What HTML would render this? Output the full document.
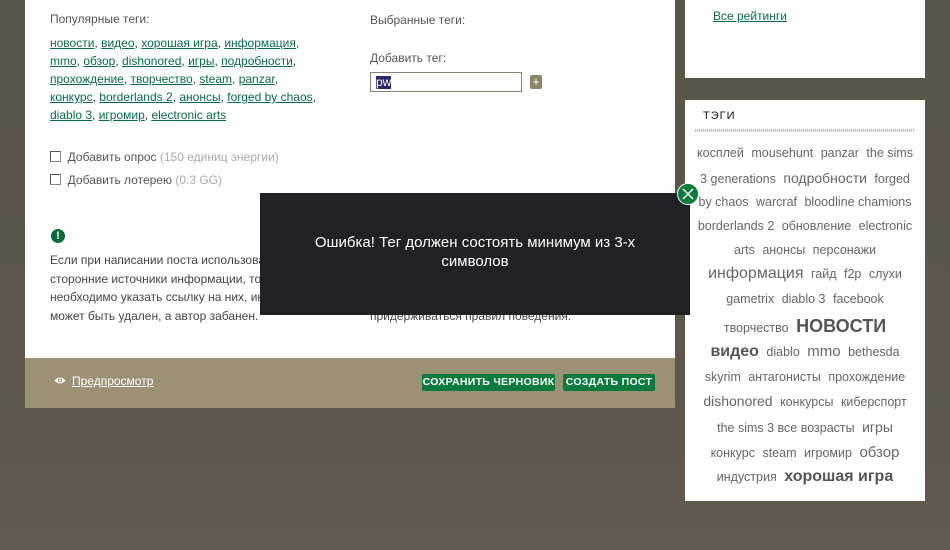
<!DOCTYPE html>
<html><head><meta charset="utf-8"><style>
*{margin:0;padding:0;box-sizing:border-box}
body{width:950px;height:550px;overflow:hidden;background:linear-gradient(#5a5648 0%,#5c5749 70%,#625c4e 100%);font-family:"Liberation Sans","Noto Sans CJK SC",sans-serif;position:relative}
.a{position:absolute;white-space:nowrap}
#main{position:absolute;left:25px;top:0;width:650px;height:358px;background:#fff}
#foot{position:absolute;left:25px;top:358px;width:650px;height:50px;background:#9b9276}
.lbl{font-size:12px;color:#555}
.tags{font-size:12px;line-height:18px;color:#333}
.tags a{color:#0b6b48;text-decoration:underline}
.p{font-size:12px;line-height:18.5px;color:#444}
.cb{width:11px;height:11px;border:1px solid #888;border-top-color:#555;border-left-color:#555;display:inline-block}
.btn{position:absolute;top:374px;height:17px;background:#0b7a3e;color:#fff;font-size:10.5px;line-height:17px;text-align:center;border-radius:2px;letter-spacing:.3px;font-weight:bold}
.cloud{position:absolute;left:685px;width:240px;text-align:center;color:#666;white-space:nowrap;font-size:12.5px}
.cloud span{margin:0 2px}
</style></head><body>
<div id="main"></div>
<div id="foot"></div>

<div class="a lbl" style="left:50px;top:12px">Популярные теги:</div>
<div class="a tags" style="left:50px;top:34px">
<a>новости</a>, <a>видео</a>, <a>хорошая игра</a>, <a>информация</a>,<br>
<a>mmo</a>, <a>обзор</a>, <a>dishonored</a>, <a>игры</a>, <a>подробности</a>,<br>
<a>прохождение</a>, <a>творчество</a>, <a>steam</a>, <a>panzar</a>,<br>
<a>конкурс</a>, <a>borderlands 2</a>, <a>анонсы</a>, <a>forged by chaos</a>,<br>
<a>diablo 3</a>, <a>игромир</a>, <a>electronic arts</a></div>

<div class="a lbl" style="left:50px;top:150px"><span class="cb" style="vertical-align:-1px"></span>&nbsp;&nbsp;Добавить опрос <span style="color:#aaa">(150 единиц энергии)</span></div>
<div class="a lbl" style="left:50px;top:173px"><span class="cb" style="vertical-align:-1px"></span>&nbsp;&nbsp;Добавить лотерею <span style="color:#aaa">(0.3 GG)</span></div>

<div class="a" style="left:51px;top:229px;width:14px;height:14px;border-radius:50%;background:#0b6b3a;color:#fff;font-size:11px;font-weight:bold;text-align:center;line-height:14px">!</div>
<div class="a p" style="left:50px;top:251px">Если при написании поста использовались<br>сторонние источники информации, то<br>необходимо указать ссылку на них, иначе пост<br>может быть удален, а автор забанен.</div>
<div class="a p" style="left:370px;top:251px">Уважаемые авторы, просим помнить,<br>я к нашим пользователям, придерживаться<br>доброжелательного отношения и<br>придерживаться правил поведения.</div>

<div class="a lbl" style="left:370px;top:13px">Выбранные теги:</div>
<div class="a lbl" style="left:370px;top:51px">Добавить тег:</div>
<div class="a" style="left:370px;top:72px;width:152px;height:20px;border:1px solid #8a8570;background:#fff"><span style="position:absolute;left:5px;top:3px;background:#2a2a6a;color:#fff;font-size:12px;line-height:13px">pw</span></div>
<div class="a" style="left:530px;top:75px;width:12px;height:14px;background:#8a8468;border-radius:2px;color:#fff;font-size:13px;line-height:14px;text-align:center">+</div>

<svg class="a" style="left:54px;top:376px" width="12" height="9" viewBox="0 0 12 9"><path d="M0.5 4.5Q6 -1.5 11.5 4.5Q6 10.5 0.5 4.5Z" fill="#fff"/><circle cx="6" cy="4.5" r="2" fill="#9b9276"/><circle cx="6" cy="4.5" r="1" fill="#fff"/></svg>
<div class="a" style="left:72px;top:374px;color:#fff;font-size:12px;text-decoration:underline">Предпросмотр</div>
<div class="btn" style="left:422px;width:133px">СОХРАНИТЬ ЧЕРНОВИК</div>
<div class="btn" style="left:563px;width:92px">СОЗДАТЬ ПОСТ</div>

<div class="a" style="left:685px;top:0;width:240px;height:78px;background:#fff"></div>
<div class="a" style="left:713px;top:9px;font-size:12px;color:#0b6b48;text-decoration:underline">Все рейтинги</div>
<div class="a" style="left:685px;top:100px;width:240px;height:401px;background:#fff"></div>
<div class="a" style="left:703px;top:110px;font-size:11px;color:#111;letter-spacing:1px">ТЭГИ</div>
<div class="a" style="left:695px;top:129px;width:220px;height:3px;background:repeating-linear-gradient(90deg,#bbb 0 1px,#fff 1px 2px)"></div>

<div class="cloud" style="top:146px"><span>косплей</span> <span>mousehunt</span> <span>panzar</span> <span>the sims</span></div>
<div class="cloud" style="top:170px"><span>3 generations</span> <span style="font-size:14px">подробности</span> <span>forged</span></div>
<div class="cloud" style="top:195px"><span>by chaos</span> <span>warcraf</span> <span>bloodline chamions</span></div>
<div class="cloud" style="top:219px"><span>borderlands 2</span> <span>обновление</span> <span>electronic</span></div>
<div class="cloud" style="top:243px"><span>arts</span> <span>анонсы</span> <span>персонажи</span></div>
<div class="cloud" style="top:265px"><span style="font-size:16px">информация</span> <span>гайд</span> <span>f2p</span> <span>слухи</span></div>
<div class="cloud" style="top:292px"><span>gametrix</span> <span>diablo 3</span> <span>facebook</span></div>
<div class="cloud" style="top:316px"><span>творчество</span> <span style="font-size:18px;font-weight:bold;color:#555">НОВОСТИ</span></div>
<div class="cloud" style="top:343px"><span style="font-size:16px;font-weight:bold;color:#555">видео</span> <span>diablo</span> <span style="font-size:15px">mmo</span> <span>bethesda</span></div>
<div class="cloud" style="top:370px"><span>skyrim</span> <span>антагонисты</span> <span>прохождение</span></div>
<div class="cloud" style="top:393px"><span style="font-size:14px">dishonored</span> <span>конкурсы</span> <span>киберспорт</span></div>
<div class="cloud" style="top:419px"><span>the sims 3 все возрасты</span> <span style="font-size:14px">игры</span></div>
<div class="cloud" style="top:444px"><span>конкурс</span> <span>steam</span> <span>игромир</span> <span style="font-size:15px">обзор</span></div>
<div class="cloud" style="top:468px"><span>индустрия</span> <span style="font-size:16px;font-weight:bold;color:#555">хорошая игра</span></div>

<div class="a" style="left:260px;top:193px;width:430px;height:122px;background:#1f2123;color:#fff;font-size:15px;line-height:19px;text-align:center;white-space:normal;padding:40px 30px 0">Ошибка! Тег должен состоять минимум из 3-х символов</div>
<div class="a" style="left:677px;top:183px;width:22px;height:22px;border-radius:50%;background:#0b7a3e;border:1px solid #fff">
<svg width="20" height="20" viewBox="0 0 20 20" style="position:absolute;left:0;top:0"><path d="M5 5L15 15M15 5L5 15" stroke="#fff" stroke-width="1.5"/></svg></div>
</body></html>
